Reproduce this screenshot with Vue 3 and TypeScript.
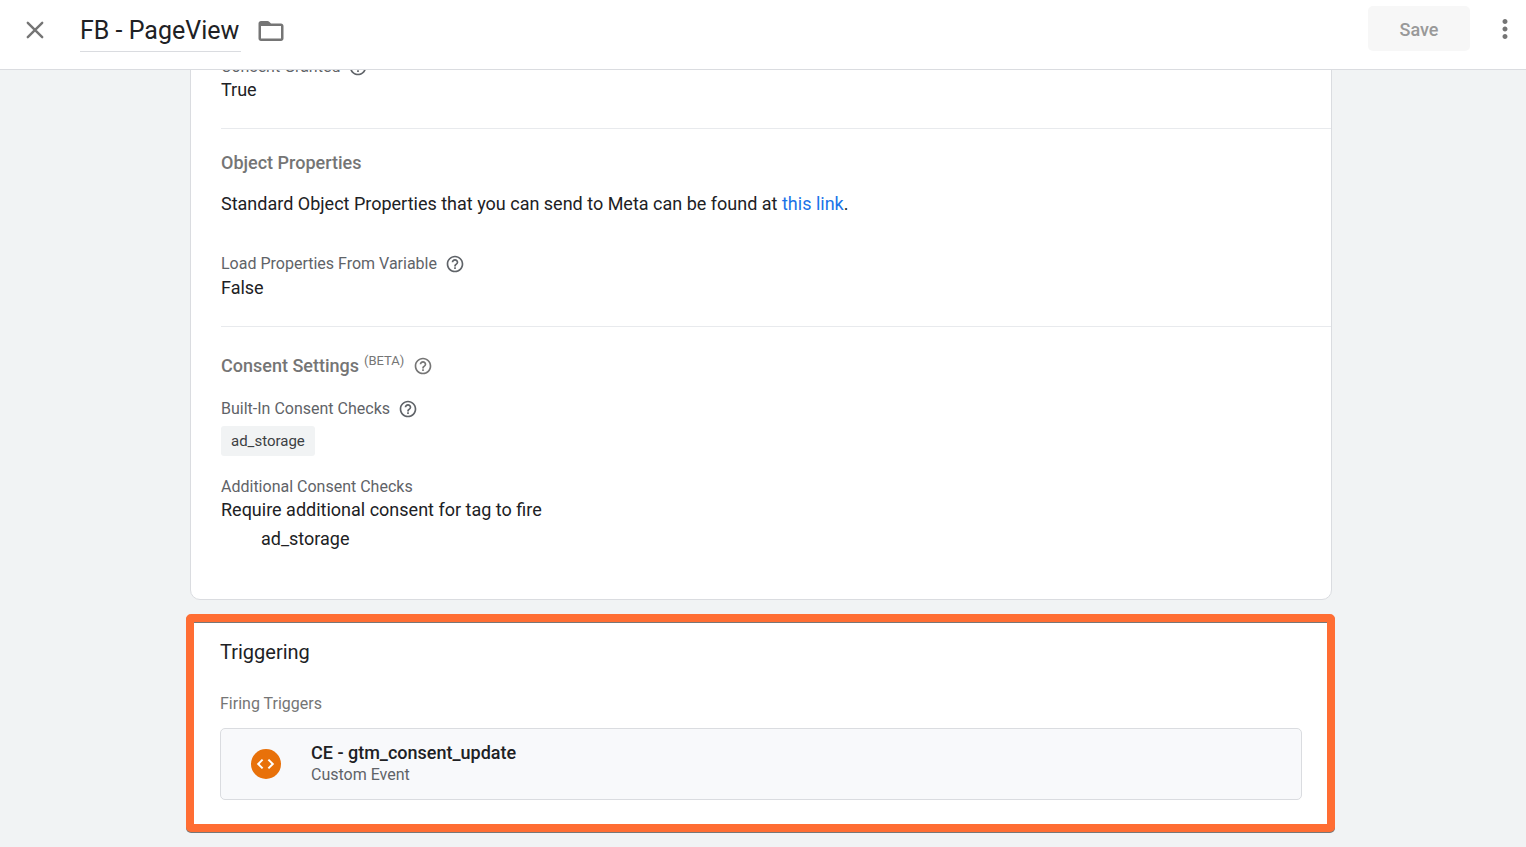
<script setup lang="ts">
import { defineComponent, h, ref } from 'vue'

const tagName = ref('FB - PageView')
const triggers = [{ name: 'CE - gtm_consent_update', kind: 'Custom Event' }]

const HelpButton = defineComponent({
  props: { topic: { type: String, required: true } },
  setup(props) {
    return () =>
      h('button', { class: 'help', type: 'button', 'aria-label': `Help: ${props.topic}` }, [
        h('svg', { viewBox: '0 0 24 24', 'aria-hidden': 'true' }, [
          h('path', {
            d: 'M11 18h2v-2h-2v2zm1-16C6.48 2 2 6.48 2 12s4.48 10 10 10 10-4.48 10-10S17.52 2 12 2zm0 18c-4.41 0-8-3.59-8-8s3.59-8 8-8 8 3.59 8 8-3.59 8-8 8zm0-14c-2.21 0-4 1.79-4 4h2c0-1.1.9-2 2-2s2 .9 2 2c0 2-3 1.75-3 5h2c0-2.25 3-2.5 3-5 0-2.21-1.79-4-4-4z',
          }),
        ]),
      ])
  },
})
</script>

<template>
  <div class="page">
    <header class="bar">
      <button class="icon-button close" type="button" aria-label="Close">
        <svg viewBox="0 0 30 30" aria-hidden="true">
          <path d="M7.8 7.8 22.2 22.2M22.2 7.8 7.8 22.2" fill="none" stroke="currentColor" stroke-width="2.4" stroke-linecap="round" />
        </svg>
      </button>
      <input v-model="tagName" class="tag-name" type="text" aria-label="Tag name" />
      <button class="icon-button folder" type="button" aria-label="Move to folder">
        <svg viewBox="0 0 24 24" aria-hidden="true">
          <path d="M20 6h-8l-1.41-1.41C10.21 4.21 9.7 4 9.17 4H4c-1.1 0-1.99.9-1.99 2L2 18c0 1.1.9 2 2 2h16c1.1 0 2-.9 2-2V8c0-1.1-.9-2-2-2zm0 12H4V8h16v10z" fill="currentColor" />
        </svg>
      </button>
      <button class="save" type="button" disabled>Save</button>
      <button class="icon-button more" type="button" aria-label="More actions">
        <svg viewBox="0 0 24 24" aria-hidden="true">
          <path d="M12 8c1.1 0 2-.9 2-2s-.9-2-2-2-2 .9-2 2 .9 2 2 2zm0 2c-1.1 0-2 .9-2 2s.9 2 2 2 2-.9 2-2-.9-2-2-2zm0 6c-1.1 0-2 .9-2 2s.9 2 2 2 2-.9 2-2-.9-2-2-2z" fill="currentColor" />
        </svg>
      </button>
    </header>

    <main class="content">
      <section class="card">
        <div class="group">
          <div class="label">Consent Granted <HelpButton topic="Consent Granted" /></div>
          <div class="value">True</div>
        </div>

        <div class="group">
          <h2 class="group-title">Object Properties</h2>
          <p class="value intro">
            Standard Object Properties that you can send to Meta can be found at <a href="#">this link</a>.
          </p>
          <div class="label">Load Properties From Variable <HelpButton topic="Load Properties From Variable" /></div>
          <div class="value">False</div>
        </div>

        <div class="group">
          <h2 class="group-title consent-title">
            <span>Consent Settings</span><span class="beta">(BETA)</span>
            <HelpButton topic="Consent Settings" />
          </h2>
          <div class="label">Built-In Consent Checks <HelpButton topic="Built-In Consent Checks" /></div>
          <span class="chip">ad_storage</span>
          <div class="label">Additional Consent Checks</div>
          <div class="value">Require additional consent for tag to fire</div>
          <div class="value nested">ad_storage</div>
        </div>
      </section>

      <section class="triggering">
        <h2 class="card-title">Triggering</h2>
        <div class="label muted">Firing Triggers</div>
        <button v-for="trigger in triggers" :key="trigger.name" class="trigger" type="button">
          <svg class="trigger-icon" viewBox="0 0 30 30" aria-hidden="true">
            <circle cx="15" cy="15" r="15" fill="#e8710a" />
            <path d="M11.6 10.6 7.2 15l4.4 4.4M17.4 10.6l4.4 4.4-4.4 4.4" fill="none" stroke="#fff" stroke-width="2" />
          </svg>
          <span class="trigger-text">
            <span class="trigger-name">{{ trigger.name }}</span>
            <span class="label">{{ trigger.kind }}</span>
          </span>
        </button>
      </section>
    </main>
  </div>
</template>

<style>
body {
  margin: 0;
}
</style>

<style scoped>
.page {
  display: flex;
  flex-direction: column;
  height: 100vh;
  overflow: hidden;
  background: #f1f3f4;
  color: #202124;
  font-family: Roboto, "Liberation Sans", sans-serif;
  font-size: 18px;
  line-height: 24px;
}

button {
  padding: 0;
  border: 0;
  background: none;
  color: inherit;
  font: inherit;
  cursor: pointer;
}

.bar {
  display: flex;
  flex: none;
  align-items: flex-start;
  padding: 6px 6px 13px 20px;
  border-bottom: 1px solid #dadce0;
  background: #fff;
  color: #757575;
}

.icon-button {
  display: flex;
  align-items: center;
  height: 48px;
}

.icon-button svg {
  width: 30px;
  height: 30px;
}

.folder {
  margin-left: 15px;
  height: 50px;
}

.more {
  margin-left: 20px;
  height: 46px;
}

.tag-name {
  box-sizing: border-box;
  width: 161px;
  height: 46px;
  margin-left: 30px;
  padding: 4px 0 0;
  border: 0;
  border-bottom: 1px solid #dadce0;
  outline: 0;
  background: none;
  color: #202124;
  font: 400 25px "Google Sans", Roboto, sans-serif;
}

.save {
  width: 102px;
  height: 45px;
  margin-left: auto;
  padding-top: 2px;
  border-radius: 5px;
  background: #f7f7f7;
  color: #999;
  font: 500 18px "Google Sans", Roboto, sans-serif;
  cursor: default;
}

.content {
  display: flex;
  flex: 1;
  flex-direction: column;
  justify-content: flex-end;
  gap: 14px;
  min-height: 0;
  overflow: hidden;
  padding: 0 191px 15px 186px;
}

.card {
  flex: none;
  margin: 0 3px 0 4px;
  padding: 24px 0 22px 30px;
  border: 1px solid #dadce0;
  border-radius: 10px;
  background: #fff;
}

.group {
  padding: 22px 0 26px;
}

.group + .group {
  border-top: 1px solid #e8eaed;
}

.group-title {
  margin: 0;
  color: #757575;
  font-size: 18px;
  font-weight: 500;
  line-height: 24px;
}

.intro {
  margin: 17px 0 37px;
}

.intro ~ .value {
  margin-top: 1px;
}

a {
  color: #1a73e8;
  text-decoration: none;
}

.label {
  display: flex;
  align-items: center;
  gap: 8px;
  color: #5f6368;
  font-size: 16px;
  line-height: 22px;
}

.label.muted {
  color: #757575;
}

:deep(.help) {
  display: flex;
  padding: 1px 0;
  border: 0;
  background: none;
  color: inherit;
  cursor: pointer;
}

:deep(.help svg) {
  width: 20px;
  height: 20px;
  fill: currentColor;
}

.consent-title {
  display: flex;
  align-items: center;
  margin: 5px 0 20px;
}

.beta {
  margin: 0 9px 10px 5px;
  font-size: 13px;
  font-weight: 400;
  line-height: 14px;
}

.chip {
  display: inline-block;
  margin: 6px 0 20px;
  padding: 0 10px;
  border-radius: 3px;
  background: #f1f3f4;
  color: #3c4043;
  font-size: 15px;
  line-height: 30px;
  vertical-align: top;
}

.nested {
  margin-top: 5px;
  padding-left: 40px;
}

.triggering {
  flex: none;
  padding: 16px 25px 24px 26px;
  border: 8px solid #ff6d33;
  border-radius: 5px;
  background: #fff;
  box-shadow: 0 1px 0 #777, inset 0 1px 0 #777;
}

.card-title {
  margin: 0 0 27px;
  font: 400 20px/28px "Google Sans", Roboto, sans-serif;
}

.trigger {
  display: flex;
  box-sizing: border-box;
  align-items: center;
  gap: 30px;
  width: 100%;
  height: 72px;
  margin-top: 13px;
  padding: 0 30px;
  border: 1px solid #dadce0;
  border-radius: 5px;
  background: #f8f9fb;
  text-align: left;
}

.trigger-icon {
  width: 30px;
  height: 30px;
}

.trigger-text {
  display: flex;
  flex-direction: column;
}

.trigger-name {
  font-weight: 500;
  line-height: 22px;
}
</style>
